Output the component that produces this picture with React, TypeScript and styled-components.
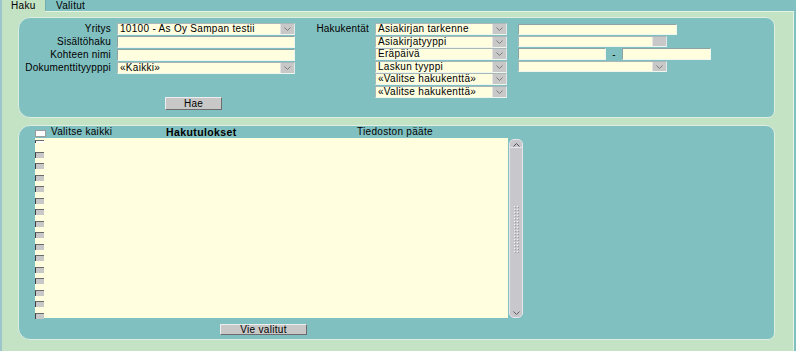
import React from 'react';
import styled, { createGlobalStyle } from 'styled-components';

const TEAL = '#80c0c0';
const GREEN = '#c4e2c4';
const CREAM = '#ffffe0';
const GREY = '#c8c8c8';
const EDGE = '#9cc6cc';

const Global = createGlobalStyle`
  html, body { margin: 0; padding: 0; background: ${TEAL}; }
  body {
    font-family: "Liberation Sans", Arial, sans-serif;
    font-size: 10px;
    color: #000;
  }
  * { box-sizing: border-box; }
`;

const Page = styled.div`
  width: 796px;
  height: 351px;
  display: flex;
  flex-direction: column;
  overflow: hidden;
`;

const TabBar = styled.div`
  display: flex;
  height: 11px;
`;

const Tab = styled.div<{ $active?: boolean; $w: number; $pad: number }>`
  position: relative;
  z-index: 1;
  width: ${(p) => p.$w}px;
  height: ${(p) => (p.$active ? 12 : 11)}px;
  padding-left: ${(p) => p.$pad}px;
  line-height: 11px;
  letter-spacing: 0.3px;
  background: ${(p) => (p.$active ? GREEN : TEAL)};
  border-left: ${(p) => (p.$active ? `2px solid ${EDGE}` : '1px solid #72acac')};
  white-space: nowrap;
`;

const Content = styled.div`
  flex: 1;
  margin-right: 2px;
  background: ${GREEN};
  border-top: 1px solid #e6f4e6;
  border-left: 2px solid ${EDGE};
  border-right: 1px solid #e6f4e6;
  padding: 5px 18px 0 16px;
  display: flex;
  flex-direction: column;
  gap: 7px;
`;

const Panel = styled.div<{ $h: number }>`
  height: ${(p) => p.$h}px;
  background: ${TEAL};
  border: 1px solid #dcefe0;
  border-radius: 12px 9px 7px 12px;
`;

const TopPanel = styled(Panel)`
  display: flex;
  align-items: flex-start;
  padding-top: 5px;
`;

const LeftBlock = styled.div`
  display: flex;
  flex-direction: column;
`;

const FormGrid = styled.div<{ $cols: string; $gap: number; $rowGap: number }>`
  display: grid;
  grid-template-columns: ${(p) => p.$cols};
  column-gap: ${(p) => p.$gap}px;
  row-gap: ${(p) => p.$rowGap}px;
  grid-auto-rows: 12px;
`;

const Label = styled.div<{ $col?: number }>`
  grid-column: ${(p) => p.$col ?? 1};
  text-align: right;
  line-height: 12px;
  white-space: nowrap;
  letter-spacing: 0.2px;
`;

const FieldCell = styled.div<{ $col?: number }>`
  grid-column: ${(p) => p.$col ?? 2};
  display: flex;
  align-items: center;
  gap: 0;
`;

const TextField = styled.div<{ $w?: number; $h?: number }>`
  width: ${(p) => (p.$w ? `${p.$w}px` : '100%')};
  height: ${(p) => p.$h ?? 12}px;
  background: ${CREAM};
  border-top: 1px solid #8ea4a4;
  border-left: 1px solid #8ea4a4;
  border-bottom: 1px solid #eef6ee;
  border-right: 1px solid #eef6ee;
`;

const SelectBox = styled.div<{ $w?: number; $h?: number }>`
  width: ${(p) => (p.$w ? `${p.$w}px` : '100%')};
  height: ${(p) => p.$h ?? 12}px;
  display: flex;
  background: ${CREAM};
  border-top: 1px solid #a8b8b8;
  border-left: 1px solid #a8b8b8;
  border-bottom: 1px solid #eef6ee;
  border-right: 1px solid #e0e8e8;
`;

const SelectText = styled.div`
  flex: 1;
  padding-left: 2px;
  line-height: 10px;
  white-space: nowrap;
  overflow: hidden;
  letter-spacing: 0.3px;
`;

const ArrowPart = styled.div`
  width: 14px;
  height: 100%;
  background: ${GREY};
  border-left: 1px solid #e4e4e4;
  display: flex;
  align-items: center;
  justify-content: center;
`;

const Dash = styled.div`
  width: 16px;
  text-align: center;
  line-height: 11px;
`;

const Button = styled.div<{ $w: number; $h: number; $ml: number; $mt: number }>`
  width: ${(p) => p.$w}px;
  height: ${(p) => p.$h}px;
  margin-left: ${(p) => p.$ml}px;
  margin-top: ${(p) => p.$mt}px;
  background: ${GREY};
  border-top: 1px solid #eeeeee;
  border-left: 1px solid #eeeeee;
  border-bottom: 1px solid #6c6c6c;
  border-right: 1px solid #6c6c6c;
  text-align: center;
  line-height: ${(p) => p.$h - 2}px;
  letter-spacing: 0.3px;
`;

const MidBlock = styled.div`
  margin-left: 0;
`;

const RightBlock = styled.div`
  margin-left: 11px;
  display: grid;
  grid-auto-rows: 12px;
  row-gap: 0.6px;
`;

const RightRow = styled.div`
  display: flex;
  align-items: center;
`;

const BottomPanel = styled(Panel)`
  display: flex;
  flex-direction: column;
`;

const HeaderRow = styled.div`
  display: flex;
  align-items: center;
  height: 12px;
  padding-left: 16px;
`;

const HeaderCheck = styled.div`
  width: 11px;
  height: 7px;
  margin-top: 2px;
  background: #ffffff;
  border: 1px solid #9c9c9c;
`;

const HeadCell = styled.div<{ $w?: number; $bold?: boolean; $ml?: number }>`
  width: ${(p) => (p.$w ? `${p.$w}px` : 'auto')};
  margin-left: ${(p) => p.$ml ?? 0}px;
  font-weight: ${(p) => (p.$bold ? 700 : 400)};
  font-size: ${(p) => (p.$bold ? 10.5 : 10)}px;
  letter-spacing: ${(p) => (p.$bold ? 0.4 : 0.3)}px;
  white-space: nowrap;
  line-height: 12px;
`;

const ListRow = styled.div`
  display: flex;
  padding-left: 16px;
  height: 180px;
`;

const ListArea = styled.div`
  width: 473px;
  height: 180px;
  background: ${CREAM};
  padding-top: 2px;
  display: flex;
  flex-direction: column;
`;

const CheckRow = styled.div`
  height: 11.5px;
  flex: none;
`;

const RowCheck = styled.div<{ $first?: boolean }>`
  width: 9px;
  height: ${(p) => (p.$first ? 3 : 6)}px;
  background: ${(p) => (p.$first ? '#ffffff' : GREY)};
  border-top: 1px solid #6a6a6a;
  border-left: 1px solid #404040;
`;

const Scrollbar = styled.div`
  width: 14px;
  height: 179px;
  margin-left: 1px;
  margin-top: 1px;
  background: #c8c8cc;
  border: 1px solid #e6e6ea;
  border-radius: 5px;
  display: flex;
  flex-direction: column;
  align-items: center;
  justify-content: space-between;
  padding: 3px 0 2px;
`;

const ScrollEnd = styled.div<{ $top?: boolean }>`
  width: 100%;
  height: 5px;
  display: flex;
  align-items: center;
  justify-content: center;
  border-bottom: ${(p) => (p.$top ? '1px solid #e8e8ec' : 'none')};
`;

const Grip = styled.div`
  width: 7px;
  height: 48px;
  background-image: radial-gradient(circle, #f4f4f4 0.7px, transparent 0.9px),
    radial-gradient(circle, #9a9aa0 0.6px, transparent 0.8px);
  background-size: 3px 3px, 3px 3px;
  background-position: 0 0, 1px 1px;
`;

const Chevron: React.FC<{ up?: boolean; color?: string }> = ({ up, color = '#7a7a7a' }) => (
  <svg width="7" height="4" viewBox="0 0 7 4">
    <polyline
      points={up ? '0.5,3.5 3.5,0.5 6.5,3.5' : '0.5,0.5 3.5,3.5 6.5,0.5'}
      fill="none"
      stroke={color}
      strokeWidth="1"
    />
  </svg>
);

const Select: React.FC<{ text?: string; w?: number; h?: number; arrow?: boolean }> = ({
  text = '',
  w,
  h,
  arrow = true,
}) => (
  <SelectBox $w={w} $h={h}>
    <SelectText>{text}</SelectText>
    <ArrowPart>{arrow && <Chevron />}</ArrowPart>
  </SelectBox>
);

const hakukentat = [
  'Asiakirjan tarkenne',
  'Asiakirjatyyppi',
  'Eräpäivä',
  'Laskun tyyppi',
  '«Valitse hakukenttä»',
  '«Valitse hakukenttä»',
];

export default function App() {
  const rows = Array.from({ length: 16 }, (_, i) => i);
  return (
    <>
      <Global />
      <Page>
        <TabBar>
          <Tab $active $w={45} $pad={9}>
            Haku
          </Tab>
          <Tab $w={80} $pad={10}>
            Valitut
          </Tab>
        </TabBar>
        <Content>
          <TopPanel $h={101}>
            <LeftBlock>
              <FormGrid $cols="92px 178px" $gap={6} $rowGap={1}>
                <Label>Yritys</Label>
                <FieldCell>
                  <Select text="10100 - As Oy Sampan testii" />
                </FieldCell>
                <Label>Sisältöhaku</Label>
                <FieldCell>
                  <TextField />
                </FieldCell>
                <Label>Kohteen nimi</Label>
                <FieldCell>
                  <TextField />
                </FieldCell>
                <Label>Dokumenttityypppi</Label>
                <FieldCell>
                  <Select text="«Kaikki»" />
                </FieldCell>
              </FormGrid>
              <Button $w={57} $h={13} $ml={146} $mt={23}>
                Hae
              </Button>
            </LeftBlock>
            <MidBlock>
              <FormGrid $cols="74px 132px" $gap={6} $rowGap={0.6}>
                <Label>Hakukentät</Label>
                {hakukentat.map((t, i) => (
                  <FieldCell key={i} $col={2}>
                    <Select text={t} />
                  </FieldCell>
                ))}
              </FormGrid>
            </MidBlock>
            <RightBlock>
              <RightRow>
                <TextField $w={159} $h={11} />
              </RightRow>
              <RightRow>
                <Select w={149} h={11} arrow={false} />
              </RightRow>
              <RightRow>
                <TextField $w={88} $h={12} />
                <Dash>-</Dash>
                <TextField $w={89} $h={12} />
              </RightRow>
              <RightRow>
                <Select w={149} h={11} />
              </RightRow>
            </RightBlock>
          </TopPanel>
          <BottomPanel $h={215}>
            <HeaderRow>
              <HeaderCheck />
              <HeadCell $w={115} $ml={5}>
                Valitse kaikki
              </HeadCell>
              <HeadCell $w={191} $bold>
                Hakutulokset
              </HeadCell>
              <HeadCell>Tiedoston pääte</HeadCell>
            </HeaderRow>
            <ListRow>
              <ListArea>
                {rows.map((i) => (
                  <CheckRow key={i}>
                    <RowCheck $first={i === 0} />
                  </CheckRow>
                ))}
              </ListArea>
              <Scrollbar>
                <ScrollEnd $top>
                  <Chevron up color="#505050" />
                </ScrollEnd>
                <Grip />
                <ScrollEnd>
                  <Chevron color="#606060" />
                </ScrollEnd>
              </Scrollbar>
            </ListRow>
            <Button $w={87} $h={11} $ml={201} $mt={6}>
              Vie valitut
            </Button>
          </BottomPanel>
        </Content>
      </Page>
    </>
  );
}
